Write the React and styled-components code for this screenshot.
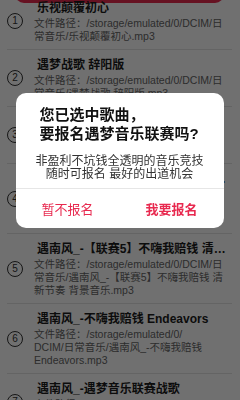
import React from "react";
import styled, { createGlobalStyle } from "styled-components";

const songs = [
  {
    title: "乐视颠覆初心",
    path: ["文件路径：/storage/emulated/0/DCIM/日", "常音乐/乐视颠覆初心.mp3"],
  },
  {
    title: "遇梦战歌 辞阳版",
    path: ["文件路径：/storage/emulated/0/DCIM/日", "常音乐/遇梦战歌 辞阳版.mp3"],
  },
  {
    title: "遇梦音乐联赛 主题曲",
    path: ["文件路径：/storage/emulated/0/DCIM/日", "常音乐/遇梦音乐联赛 主题曲.mp3"],
  },
  {
    title: "遇南风_-【联赛4】不嗨我赔钱 轻快节奏 背景音乐",
    path: [
      "文件路径：/storage/emulated/0/DCIM/日",
      "常音乐/遇南风_-【联赛4】不嗨我赔钱 轻",
      "快节奏 背景音乐.mp3",
    ],
  },
  {
    title: "遇南风_-【联赛5】不嗨我赔钱 清新节奏 背景音乐",
    path: [
      "文件路径：/storage/emulated/0/DCIM/日",
      "常音乐/遇南风_-【联赛5】不嗨我赔钱 清",
      "新节奏 背景音乐.mp3",
    ],
  },
  {
    title: "遇南风_-不嗨我赔钱 Endeavors",
    path: [
      "文件路径：/storage/emulated/0/",
      "DCIM/日常音乐/遇南风_-不嗨我赔钱",
      "Endeavors.mp3",
    ],
  },
  {
    title: "遇南风_-遇梦音乐联赛战歌",
    path: ["文件路径：/storage/emulated/0/DCIM/日", "常音乐/遇南风_-遇梦音乐联赛战歌.mp3"],
  },
];

const App = () => {
  return (
    <Screen>
      <GlobalStyle />
      {/* scan button, scrolled mostly out of view */}
      <ScanButton />

      <SongList>
        {songs.map((song, i) => (
          <SongItem key={i}>
            <IndexCircle>{i + 1}</IndexCircle>
            <SongBody>
              <SongTitle>{song.title}</SongTitle>
              {song.path.map((line, j) => (
                <PathLine key={j}>{line}</PathLine>
              ))}
            </SongBody>
          </SongItem>
        ))}
      </SongList>

      {/* confirm dialog */}
      <Overlay>
        <Dialog>
          <DialogTitle>
            <div>您已选中歌曲，</div>
            <div>要报名遇梦音乐联赛吗?</div>
          </DialogTitle>
          <DialogText>
            <div>非盈利不坑钱全透明的音乐竞技</div>
            <div>随时可报名 最好的出道机会</div>
          </DialogText>
          <Actions>
            <ActionButton>暂不报名</ActionButton>
            <ActionButton $primary>我要报名</ActionButton>
          </Actions>
        </Dialog>
      </Overlay>
    </Screen>
  );
};

const GlobalStyle = createGlobalStyle`
  body {
    margin: 0;
    background: #ffffff;
    font-family: "Liberation Sans", "Noto Sans CJK SC", sans-serif;
  }
`;

const Screen = styled.div`
  width: 240px;
  height: 400px;
  overflow: hidden;
  background: #ffffff;
`;

const ScanButton = styled.div`
  margin: -34px 16px 0 15px;
  height: 37px;
  border-radius: 9px;
  background: #e8294f;
`;

const SongList = styled.ul`
  list-style: none;
  margin: -10.5px 0 0;
  padding: 0;
`;

const SongItem = styled.li`
  display: grid;
  grid-template-columns: 16px minmax(0, 1fr);
  column-gap: 11px;
  align-items: center;
  margin: 0 8px 0 7px;
  padding: 7px 4px 6px 0;
  border-bottom: 1px solid #e3e3e3;
`;

const IndexCircle = styled.div`
  width: 16px;
  height: 16px;
  box-sizing: border-box;
  border: 1px solid #333;
  border-radius: 50%;
  font-size: 10px;
  line-height: 1;
  color: #333;
  display: flex;
  align-items: center;
  justify-content: center;
`;

const SongBody = styled.div`
  min-width: 0;
`;

const SongTitle = styled.div`
  height: 17px;
  padding-left: 3px;
  font-size: 12px;
  font-weight: 700;
  line-height: 17px;
  color: #1c1c1c;
  white-space: nowrap;
  overflow: hidden;
  text-overflow: ellipsis;
`;

const PathLine = styled.div`
  height: 13px;
  font-size: 10.5px;
  line-height: 13px;
  color: #666;
  white-space: nowrap;
`;

const Overlay = styled.div`
  position: fixed;
  inset: 0;
  background: rgba(0, 0, 0, 0.56);
  display: flex;
  justify-content: center;
  align-items: flex-start;
  padding-top: 93px;
`;

const Dialog = styled.div`
  width: 208px;
  margin-left: -1px;
  background: #fff;
  border-radius: 10px;
  overflow: hidden;
`;

const DialogTitle = styled.div`
  padding: 12px 10px 0 24px;
  font-size: 15px;
  font-weight: 700;
  color: #111;

  div {
    height: 19px;
    line-height: 19px;
    white-space: nowrap;
  }
`;

const DialogText = styled.div`
  padding: 12px 0 8px;
  font-size: 12px;
  color: #333;
  text-align: center;

  div {
    height: 12.5px;
    line-height: 12.5px;
    white-space: nowrap;
  }
`;

const Actions = styled.div`
  display: grid;
  grid-template-columns: 1fr 1fr;
  height: 39px;
  border-top: 1px solid #e6e6e6;
`;

const ActionButton = styled.button`
  border: none;
  background: none;
  padding: 0;
  font-family: inherit;
  font-size: 13px;
  font-weight: ${({ $primary }) => ($primary ? 700 : 400)};
  color: #e8294f;
`;

export default App;
